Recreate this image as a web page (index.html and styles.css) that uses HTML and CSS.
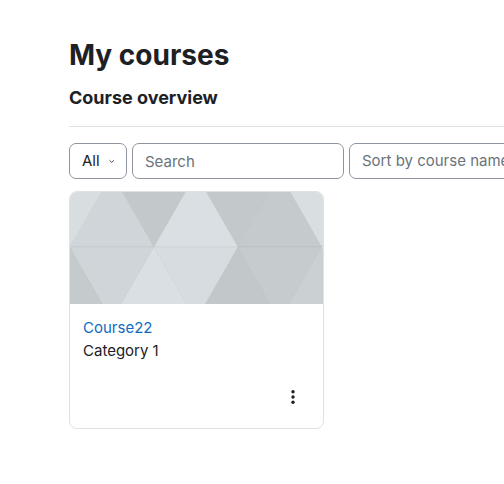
FILE: index.html
```html
<!DOCTYPE html>
<html lang="en">
<head>
<meta charset="utf-8">
<title>My courses</title>
<link rel="stylesheet" href="styles.css">
</head>
<body>
<div class="page">
  <h1 class="title">My courses</h1>
  <h2 class="subtitle">Course overview</h2>
  <hr class="divider">
  <div class="filters">
    <div class="select select-all">
      <span>All</span>
      <svg class="chev" width="7" height="5" viewBox="0 0 7 5"><path d="M1 1.2 L3.5 3.7 L6 1.2" fill="none" stroke="#343a40" stroke-width="1.2" stroke-linecap="round" stroke-linejoin="round"/></svg>
    </div>
    <input class="search" type="text" placeholder="Search">
    <div class="select select-sort"><span>Sort by course name</span></div>
  </div>
  <div class="cards">
    <div class="card">
      <svg class="card-img" width="253" height="112" viewBox="0 0 253 112">
        <g stroke="#000" stroke-opacity="0.035" stroke-width="1">
          <polygon points="-42,-18 42,-18 0,55" fill="#d8dde0"/>
          <polygon points="42,-18 0,55 84,55" fill="#cfd5d8"/>
          <polygon points="42,-18 126,-18 84,55" fill="#c3c8ca"/>
          <polygon points="126,-18 84,55 168,55" fill="#d9dfe2"/>
          <polygon points="126,-18 210,-18 168,55" fill="#c3c8ca"/>
          <polygon points="210,-18 168,55 252,55" fill="#c5cacc"/>
          <polygon points="210,-18 294,-18 252,55" fill="#d9dee1"/>
          <polygon points="294,-18 252,55 336,55" fill="#cdd2d5"/>
          <polygon points="0,55 -42,128 42,128" fill="#c5cacd"/>
          <polygon points="0,55 84,55 42,128" fill="#cfd5d8"/>
          <polygon points="84,55 42,128 126,128" fill="#d9dfe2"/>
          <polygon points="84,55 168,55 126,128" fill="#d6dcdf"/>
          <polygon points="168,55 126,128 210,128" fill="#c2c7c9"/>
          <polygon points="168,55 252,55 210,128" fill="#c6cbcd"/>
          <polygon points="252,55 210,128 294,128" fill="#cbd0d3"/>
        </g>
      </svg>
      <div class="card-body">
        <a class="course-link" href="#">Course22</a>
        <div class="category">Category 1</div>
      </div>
      <div class="card-footer">
        <button class="menu-btn" type="button" aria-label="Course actions">
          <svg width="4" height="14" viewBox="0 0 4 14"><circle cx="2" cy="1.8" r="1.7" fill="#1d2125"/><circle cx="2" cy="7" r="1.7" fill="#1d2125"/><circle cx="2" cy="12.2" r="1.7" fill="#1d2125"/></svg>
        </button>
      </div>
    </div>
  </div>
</div>
</body>
</html>
```
FILE: styles.css
```css
html, body {
  margin: 0;
  padding: 0;
  background: #ffffff;
  overflow: hidden;
}
body {
  font-family: Inter, "Liberation Sans", sans-serif;
  color: #1d2125;
  font-size: 15px;
  line-height: 1.5;
}
.page {
  width: 1000px;
  padding: 38px 0 0 69px;
  box-sizing: border-box;
}
.title {
  margin: 0;
  font-size: 28px;
  line-height: 34.8px;
  font-weight: 700;
}
.subtitle {
  margin: 14px 0 0;
  font-size: 18px;
  line-height: 22.5px;
  font-weight: 700;
}
.divider {
  margin: 17px 0 0;
  border: 0;
  border-top: 1px solid #dee2e6;
  height: 0;
}
.filters {
  display: flex;
  gap: 5px;
  margin-top: 16px;
}
.select, .search {
  box-sizing: border-box;
  height: 36px;
  border: 1px solid #8f959e;
  border-radius: 7px;
  padding: 0 12px;
  font-family: inherit;
  font-size: 15px;
  color: #1d2125;
  display: flex;
  align-items: center;
  background: #fff;
}
.select-all {
  width: 58px;
  gap: 9px;
}
.chev {
  display: block;
  margin-top: 1px;
}
.search {
  width: 212px;
  outline: none;
}
.search::placeholder {
  color: #6a737b;
  opacity: 1;
}
.select-sort {
  width: 240px;
  color: #6a737b;
}
.cards {
  margin-top: 12px;
  display: flex;
}
.card {
  width: 255px;
  box-sizing: border-box;
  border: 1px solid #dee2e6;
  border-radius: 8px;
  overflow: hidden;
  display: flex;
  flex-direction: column;
}
.card-img {
  display: block;
  width: 253px;
  height: 112px;
}
.card-body {
  padding: 13px 13px 0;
}
.course-link {
  display: block;
  color: #0f6cbf;
  text-decoration: none;
}
.category {
  color: #1d2125;
}
.card-footer {
  display: flex;
  justify-content: flex-end;
  padding: 17px 12px 13px 13px;
}
.menu-btn {
  width: 36px;
  height: 36px;
  border: 0;
  background: transparent;
  padding: 0;
  display: flex;
  align-items: center;
  justify-content: center;
  cursor: pointer;
}
.menu-btn svg {
  display: block;
}
```
